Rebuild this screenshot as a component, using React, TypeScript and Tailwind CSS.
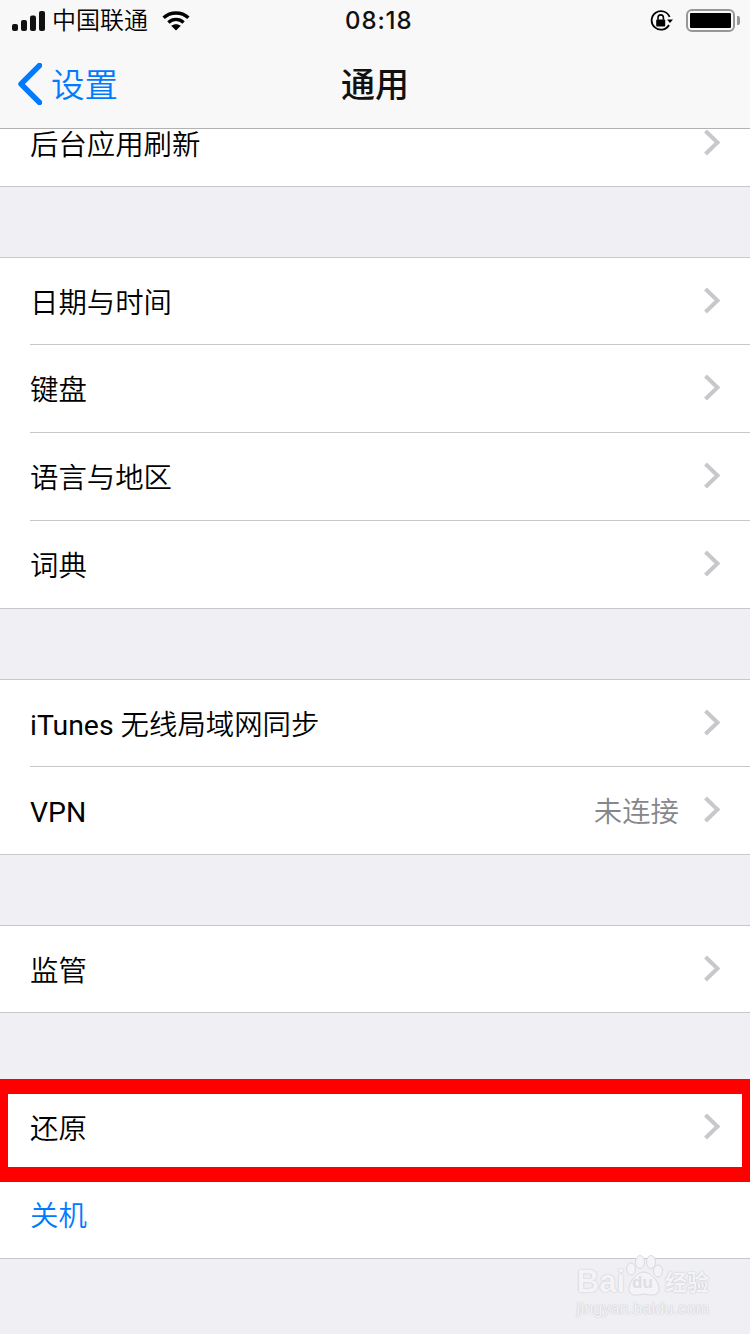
import type { ReactNode } from "react";

const Chevron = () => (
  <svg width="18" height="28" viewBox="0 0 18 28" className="shrink-0 mb-[1px]" fill="none">
    <path d="M2.5 2 L14.5 13.5 L2.5 25" stroke="#c7c7cc" strokeWidth="4" />
  </svg>
);

function Row({ label, value, blue, last, noChevron, h }: { label: ReactNode; value?: string; blue?: boolean; last?: boolean; noChevron?: boolean; h: string }) {
  return (
    <div className="pl-[30px]">
      <div className={`${h} pr-[29px] flex items-center justify-between ${last ? "" : "border-b border-[#c8c7cc]"}`}>
        <span className={`pt-[6px] text-[28.4px] leading-none font-[350] ${blue ? "text-[#007aff]" : "text-black"}`}>{label}</span>
        <div className="flex items-center gap-[24px]">
          {value && <span className="pt-[6px] text-[28.4px] leading-none font-[350] text-[#86868b]">{value}</span>}
          {!noChevron && <Chevron />}
        </div>
      </div>
    </div>
  );
}

function Group({ children, className = "" }: { children: ReactNode; className?: string }) {
  return <div className={`bg-white border-y border-[#c8c7cc] ${className}`}>{children}</div>;
}

export default function App() {
  return (
    <div className="relative w-[750px] h-[1334px] overflow-hidden bg-[#efeff4] font-['Roboto','Noto_Sans_CJK_SC',sans-serif]">
      <header className="h-[129px] bg-[#f8f8f8] border-b border-[#b2b2b2] flex flex-col">
        <div className="h-[41px] pl-[12px] pr-[10px] flex items-center justify-between relative">
          <div className="flex items-center gap-[7px]">
            <svg width="33" height="20" viewBox="0 0 33 20" fill="#111">
              <rect x="0" y="13" width="6" height="7" rx="2" />
              <rect x="9" y="9" width="6" height="11" rx="2" />
              <rect x="18" y="4.5" width="6" height="15.5" rx="2" />
              <rect x="27" y="0" width="6" height="20" rx="2" />
            </svg>
            <span className="text-[24px] leading-none font-[350] text-black">中国联通</span>
            <svg width="28" height="20" viewBox="0 0 28 20" className="ml-[7px]" fill="none" stroke="#000" strokeWidth="3.4">
              <path d="M1.6 6.8 C8.6 0.4 19.4 0.4 26.4 6.8" />
              <path d="M6.4 11.4 C10.8 7.4 17.2 7.4 21.6 11.4" />
              <path d="M14 19.6 L9.2 14.8 C12 12.6 16 12.6 18.8 14.8 Z" fill="#000" stroke="none" />
            </svg>
          </div>
          <span className="absolute left-[345px] top-[7px] text-[24px] leading-[28px] font-medium font-['Inter'] text-[#111] tracking-[0.9px]">08:18</span>
          <div className="flex items-center gap-[13px]">
            <svg width="23" height="22" viewBox="0 0 23 22" fill="none">
              <path d="M19 15 A9.3 9.3 0 1 1 19.6 7" stroke="#000" strokeWidth="1.8" />
              <path d="M17 9.5 H23 L20 13 Z" fill="#000" />
              <rect x="6.2" y="9.6" width="9" height="7" rx="1" fill="#000" />
              <path d="M8 9.8 V7.6 A2.7 2.7 0 0 1 13.4 7.6 V9.8" stroke="#000" strokeWidth="1.6" />
            </svg>
            <div className="flex items-center gap-[2px]">
              <div className="w-[49px] h-[23px] rounded-[6px] border-[2px] border-[#979797] p-[2px]">
                <div className="w-full h-full bg-black rounded-[1px]" />
              </div>
              <div className="w-[3px] h-[9px] bg-[#979797] rounded-r-[2px]" />
            </div>
          </div>
        </div>
        <div className="flex-1 relative flex items-center justify-center">
          <div className="absolute left-[18px] top-[22px] flex items-center gap-[9px]">
            <svg width="24" height="42" viewBox="0 0 24 42" fill="none">
              <path d="M21.5 2.5 L3 21 L21.5 39.5" stroke="#007aff" strokeWidth="5.4" strokeLinecap="round" strokeLinejoin="round" />
            </svg>
            <span className="pt-[3px] text-[33.5px] leading-none font-[350] text-[#007aff]">设置</span>
          </div>
          <span className="text-[34px] leading-none font-medium text-[#111]">通用</span>
        </div>
      </header>

      <div className="bg-white h-[58px] border-b border-[#c8c7cc] pl-[30px] pr-[29px] flex items-center justify-between">
        <span className="text-[28.4px] leading-none font-[350] text-black relative -top-[11px]">后台应用刷新</span>
        <div className="relative -top-[14px]"><Chevron /></div>
      </div>

      <Group className="mt-[70px]">
        <Row h="h-[87px]" label="日期与时间" />
        <Row h="h-[88px]" label="键盘" />
        <Row h="h-[88px]" label="语言与地区" />
        <Row h="h-[87px]" label="词典" last />
      </Group>

      <Group className="mt-[70px]">
        <Row h="h-[87px]" label={<><span className="font-normal">iTunes </span>无线局域网同步</>} />
        <Row h="h-[87px]" label={<span className="font-normal">VPN</span>} value="未连接" last />
      </Group>

      <Group className="mt-[70px]">
        <Row h="h-[86px]" label="监管" last />
      </Group>

      <Group className="mt-[70px]">
        <Row h="h-[87px]" label="还原" />
        <Row h="h-[87px]" label="关机" blue last noChevron />
      </Group>

      <div className="absolute left-0 top-[1079px] w-[750px] h-[103px] border-y-[15px] border-x-[8px] border-[#ff0000]" />

      <div className="absolute left-[575px] top-[1254px] w-[136px] flex flex-col items-center text-[#f4f4f7] [text-shadow:0_0_1.5px_#b4b4b8]">
        <div className="flex items-end h-[44px]">
          <span className="text-[31px] leading-[32px] font-bold font-['Liberation_Sans',sans-serif]">Bai</span>
          <div className="relative w-[38px] h-[44px]">
            <svg width="38" height="44" viewBox="0 0 38 44" className="absolute left-0 top-0" fill="#f4f4f7" stroke="#d0d0d4" strokeWidth="0.7">
              <ellipse cx="6" cy="15" rx="4.5" ry="6" />
              <ellipse cx="15" cy="8" rx="4.5" ry="6.5" />
              <ellipse cx="26" cy="8" rx="4.5" ry="6.5" />
              <ellipse cx="33" cy="17" rx="4.5" ry="6" />
              <path d="M19 18 C26 18 35 29 34 36 C33 43 24 41 19 40 C13 41 5 43 4 36 C3 29 12 18 19 18 Z" />
            </svg>
            <span className="absolute left-[7px] bottom-[7px] text-[17px] leading-none font-bold text-[#dedee2] font-['Liberation_Sans',sans-serif] [text-shadow:none]">du</span>
          </div>
          <span className="ml-[2px] text-[22px] leading-[30px] font-bold">经验</span>
        </div>
        <span className="text-[16px] leading-[20px] font-['Liberation_Sans',sans-serif] tracking-[0.2px] mt-[1px]">jingyan.baidu.com</span>
      </div>
    </div>
  );
}
